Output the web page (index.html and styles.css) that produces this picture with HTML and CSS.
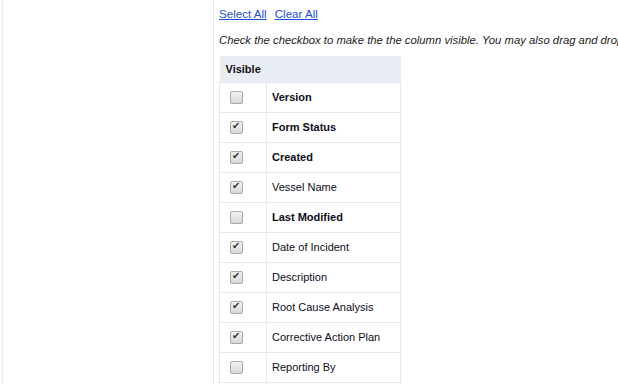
FILE: index.html
```html
<!DOCTYPE html>
<html lang="en">
<head>
  <meta charset="UTF-8" />
  <title>Column Settings</title>
  <link rel="stylesheet" href="styles.css">
</head>
<body>
  <div class="layout">
    <aside class="side-panel"></aside>
    <main class="content">
      <div class="links">
        <a href="#">Select All</a>
        <a href="#">Clear All</a>
      </div>
      <p class="hint">Check the checkbox to make the the column visible. You may also drag and drop</p>
      <table class="columns">
        <thead>
          <tr><th colspan="2">Visible</th></tr>
        </thead>
        <tbody>
          <tr><td class="chk"><input type="checkbox"></td><td class="name bold">Version</td></tr>
          <tr><td class="chk"><input type="checkbox" checked></td><td class="name bold">Form Status</td></tr>
          <tr><td class="chk"><input type="checkbox" checked></td><td class="name bold">Created</td></tr>
          <tr><td class="chk"><input type="checkbox" checked></td><td class="name">Vessel Name</td></tr>
          <tr><td class="chk"><input type="checkbox"></td><td class="name bold">Last Modified</td></tr>
          <tr><td class="chk"><input type="checkbox" checked></td><td class="name">Date of Incident</td></tr>
          <tr><td class="chk"><input type="checkbox" checked></td><td class="name">Description</td></tr>
          <tr><td class="chk"><input type="checkbox" checked></td><td class="name">Root Cause Analysis</td></tr>
          <tr><td class="chk"><input type="checkbox" checked></td><td class="name">Corrective Action Plan</td></tr>
          <tr><td class="chk"><input type="checkbox"></td><td class="name">Reporting By</td></tr>
          <tr><td class="chk"></td><td class="name"></td></tr>
        </tbody>
      </table>
    </main>
  </div>
</body>
</html>
```
FILE: styles.css
```css
* { box-sizing: border-box; margin: 0; padding: 0; }
html, body { height: 100%; overflow: hidden; }
body {
  font-family: 'Liberation Sans', Arial, sans-serif;
  background: #fff;
  color: #111;
}
.layout {
  display: flex;
  height: 100%;
  padding-left: 2px;
}
.side-panel {
  width: 212px;
  flex-shrink: 0;
  border-left: 1px solid #e8ebef;
  border-right: 1px solid #e3e5e8;
}
.content {
  padding: 6px 0 0 5px;
  white-space: nowrap;
}
.links { display: flex; gap: 8px; font-size: 11.6px; line-height: 16px; }
.links a { color: #1a4fd6; text-decoration: underline; }
.hint {
  margin-top: 11px;
  font-size: 11.3px;
  font-style: italic;
  line-height: 14px;
  color: #1b1b1b;
}
.columns {
  margin-top: 9px;
  width: 182px;
  border-collapse: collapse;
  font-size: 11px;
}
.columns th {
  background: #e8edf4;
  text-align: left;
  font-weight: bold;
  height: 26px;
  padding: 0 6px;
  font-size: 11px;
}
.columns td {
  height: 30px;
  border: 1px solid #e5eaf1;
}
.columns td.chk { width: 47px; padding-left: 10px; }
.columns td.name { padding-left: 5px; color: #0d0d1a; }
.columns td.bold { font-weight: bold; }
.columns input {
  appearance: none;
  -webkit-appearance: none;
  display: block;
  width: 13px;
  height: 13px;
  border: 1px solid #a9a9a9;
  border-radius: 2px;
  background: linear-gradient(#f2f2f2, #d8d8d8);
  position: relative;
}
.columns input:checked::after {
  content: "\2714";
  position: absolute;
  left: 1px;
  top: -2px;
  font-size: 10px;
  color: #333;
}
```
